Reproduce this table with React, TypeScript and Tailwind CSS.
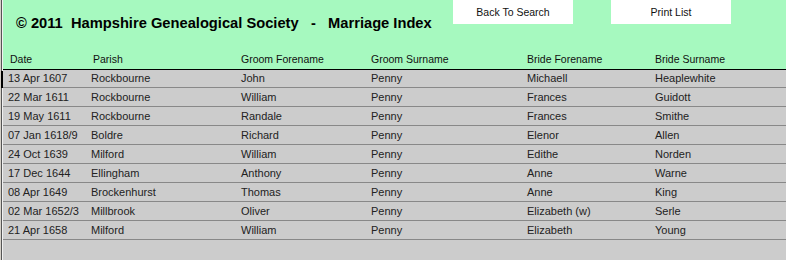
const rows = [
  ['13 Apr 1607', 'Rockbourne', 'John', 'Penny', 'Michaell', 'Heaplewhite'],
  ['22 Mar 1611', 'Rockbourne', 'William', 'Penny', 'Frances', 'Guidott'],
  ['19 May 1611', 'Rockbourne', 'Randale', 'Penny', 'Frances', 'Smithe'],
  ['07 Jan 1618/9', 'Boldre', 'Richard', 'Penny', 'Elenor', 'Allen'],
  ['24 Oct 1639', 'Milford', 'William', 'Penny', 'Edithe', 'Norden'],
  ['17 Dec 1644', 'Ellingham', 'Anthony', 'Penny', 'Anne', 'Warne'],
  ['08 Apr 1649', 'Brockenhurst', 'Thomas', 'Penny', 'Anne', 'King'],
  ['02 Mar 1652/3', 'Millbrook', 'Oliver', 'Penny', 'Elizabeth (w)', 'Serle'],
  ['21 Apr 1658', 'Milford', 'William', 'Penny', 'Elizabeth', 'Young'],
];

const cols = 'grid grid-cols-[83px_150px_130px_156px_128px_1fr]';

export default function App() {
  return (
    <div className="flex w-[786px] h-[260px] bg-[#cccccc] font-['Liberation_Sans',Arial,sans-serif] overflow-hidden">
      {/* window frame edge */}
      <div className="flex w-[3px] shrink-0">
        <div className="w-px bg-[#d4d0c8]" />
        <div className="flex flex-col w-[2px]">
          <div className="h-[71px] flex">
            <div className="w-px bg-[#555555]" />
            <div className="w-px bg-[#f0f0f0]" />
          </div>
          <div className="h-[17px] bg-black" />
          <div className="flex-1 flex">
            <div className="w-px bg-[#555555]" />
            <div className="w-px bg-[#f0f0f0]" />
          </div>
        </div>
      </div>

      <div className="flex-1 flex flex-col">
        {/* Header */}
        <div className="h-[70px] bg-[#a6f9bf] border-b border-black flex flex-col">
          <div className="flex items-start">
            <h1 className="w-[450px] shrink-0 pl-[13px] pt-[14px] text-[14.7px] font-bold text-black whitespace-pre leading-[18px]">
              {'© 2011  Hampshire Genealogical Society   -   Marriage Index'}
            </h1>
            <div className="flex gap-[38px]">
              <button className="w-[120px] h-[24px] bg-white text-[10.5px] text-[#111] pt-[1px]">
                Back To Search
              </button>
              <button className="w-[120px] h-[24px] bg-white text-[10.5px] text-[#111] pt-[1px]">
                Print List
              </button>
            </div>
          </div>
          <div className={`${cols} mt-auto pl-[5px] pb-[3px] text-[10.5px] text-[#111] leading-[13px]`}>
            <div className="pl-[2px]">Date</div>
            <div className="pl-[2px]">Parish</div>
            <div>Groom Forename</div>
            <div>Groom Surname</div>
            <div>Bride Forename</div>
            <div>Bride Surname</div>
          </div>
        </div>

        {/* Rows */}
        <div className="flex flex-col text-[11px] text-[#222]">
          {rows.map((r, i) => (
            <div
              key={i}
              className={`${cols} pl-[5px] items-center border-b border-[#888888] ${i === 0 ? 'h-[18px]' : 'h-[19px]'}`}
            >
              {r.map((c, j) => (
                <div key={j}>{c}</div>
              ))}
            </div>
          ))}
        </div>
      </div>
    </div>
  );
}
